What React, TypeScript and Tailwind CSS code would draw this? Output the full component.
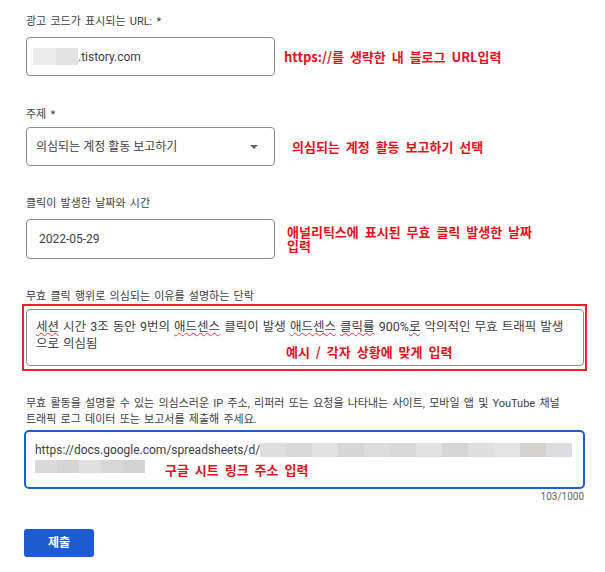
import React from 'react';

const ui = "font-['Roboto','Noto_Sans_CJK_KR',sans-serif]";
const note =
  "font-['Noto_Sans_CJK_KR',sans-serif] font-bold text-[13px] text-[#e8101a] [word-spacing:3px] whitespace-nowrap";
const spell = 'underline decoration-wavy decoration-[#e8383d] decoration-1 underline-offset-[1px]';

const blurLine1 = ['#dedede', '#d8d8d8', '#e2e2e2', '#d6d6d6', '#dcdcdc', '#d9d9d9', '#e1e1e1', '#d5d5d5', '#dfdfdf', '#e4e4e4', '#d3d2cf', '#dcdde2'];
const blurLine2 = ['#dadada', '#d4d4d4', '#e0e0e0', '#d7d7d7', '#d2d2d2'];

function Label({ children, className = '' }: { children: React.ReactNode; className?: string }) {
  return (
    <div className={`ml-[2px] text-[11px] leading-4 text-[#3c4043] [word-spacing:1.5px] ${className}`}>{children}</div>
  );
}

export default function App() {
  return (
    <div className={`${ui} bg-white w-[605px] h-[572px] pl-6 pt-[14px]`}>
      {/* URL */}
      <Label>광고 코드가 표시되는 URL: *</Label>
      <div className="mt-[7px] ml-[2px] flex items-center">
        <div className="w-[249px] h-[39px] border border-[#8a8a8a] rounded-[4px] flex items-center pl-[6px] text-[12px] text-[#3c4043]">
          <span className="inline-block w-[23px] h-[17px] bg-[#ebebeb]" />
          <span className="inline-block w-[22px] h-[17px] bg-[#e3e3e3]" />
          <span>.tistory.com</span>
        </div>
        <span className={`${note} ml-[9px]`}>https://를 생략한 내 블로그 URL입력</span>
      </div>

      {/* 주제 */}
      <Label className="mt-[31px]">주제 *</Label>
      <div className="mt-[4px] ml-[2px] flex items-center">
        <div className="w-[249px] h-[39px] border border-[#8a8a8a] rounded-[4px] flex items-center justify-between pl-[9px] pr-[16px] text-[12px] text-[#3c4043]">
          <span>의심되는 계정 활동 보고하기</span>
          <svg width="8" height="4" viewBox="0 0 8 4">
            <path d="M0 0 L4 4 L8 0 Z" fill="#5f6368" />
          </svg>
        </div>
        <span className={`${note} ml-[17px]`}>의심되는 계정 활동 보고하기 선택</span>
      </div>

      {/* 날짜 */}
      <Label className="mt-[30px]">클릭이 발생한 날짜와 시간</Label>
      <div className="mt-[7px] ml-[2px] flex items-center">
        <div className="w-[249px] h-[40px] border border-[#8a8a8a] rounded-[4px] flex items-center pl-[12px] text-[12px] text-[#3c4043]">
          2022-05-29
        </div>
        <div className={`${note} ml-[12px] leading-[14px]`}>
          <div>애널리틱스에 표시된 무효 클릭 발생한 날짜</div>
          <div>입력</div>
        </div>
      </div>

      {/* 이유 */}
      <Label className="mt-[31px] leading-[14px]">무효 클릭 행위로 의심되는 이유를 설명하는 단락</Label>
      <div className="-ml-[2px] w-[565px] border-2 border-[#e8202a] pt-[3px] pb-[3px] pl-[2px] pr-[1px]">
        <div className="relative h-[57px] border border-[#8a8a8a] rounded-[4px] pl-[9px] pt-[8px] text-[12.5px] leading-[17px] text-[#3c4043] [word-spacing:1px] whitespace-nowrap">
          <div>
            <span className={spell}>세션</span>
            {' 시간 3조 동안 9번의 '}
            <span className={spell}>애드센스</span>
            {' 클릭이 발생 '}
            <span className={spell}>애드센스</span> <span className={spell}>클릭률</span>
            {' 900%'}
            <span className={spell}>로</span>
            {' 악의적인 무효 트래픽 발생'}
          </div>
          <div>으로 의심됨</div>
          <span className={`${note} absolute left-[259px] top-[34px] leading-4`}>예시 / 각자 상황에 맞게 입력</span>
        </div>
      </div>

      {/* 로그 데이터 */}
      <Label className="mt-[25px]">
        <div>무효 활동을 설명할 수 있는 의심스러운 IP 주소, 리퍼러 또는 요청을 나타내는 사이트, 모바일 앱 및 YouTube 채널</div>
        <div>트래픽 로그 데이터 또는 보고서를 제출해 주세요.</div>
      </Label>
      <div className="relative mt-[2px] w-[561px] h-[59px] border-2 border-[#1b5fd6] rounded-[5px] pl-[9px] pt-[10px] text-[12px] leading-4 text-[#3c4043]">
        <div className="flex items-center">
          <span>https://docs.google.com/spreadsheets/d/</span>
          <span className="flex h-[14px]">
            {blurLine1.map((c, i) => (
              <span key={i} className="inline-block w-[26px] h-full" style={{ backgroundColor: c }} />
            ))}
          </span>
        </div>
        <div className="flex h-[13px] mt-[2px]">
          {blurLine2.map((c, i) => (
            <span key={i} className="inline-block w-[22px] h-full" style={{ backgroundColor: c }} />
          ))}
        </div>
        <span className={`${note} absolute left-[139px] top-[30px] leading-4`}>구글 시트 링크 주소 입력</span>
      </div>
      <div className="w-[560px] mt-px text-right text-[10px] leading-[14px] text-[#5f6368]">103/1000</div>

      <button className="mt-[25px] w-[70px] h-[28px] rounded-[3px] bg-[#1f5bd0] text-white text-[12px] font-bold">
        제출
      </button>
    </div>
  );
}
